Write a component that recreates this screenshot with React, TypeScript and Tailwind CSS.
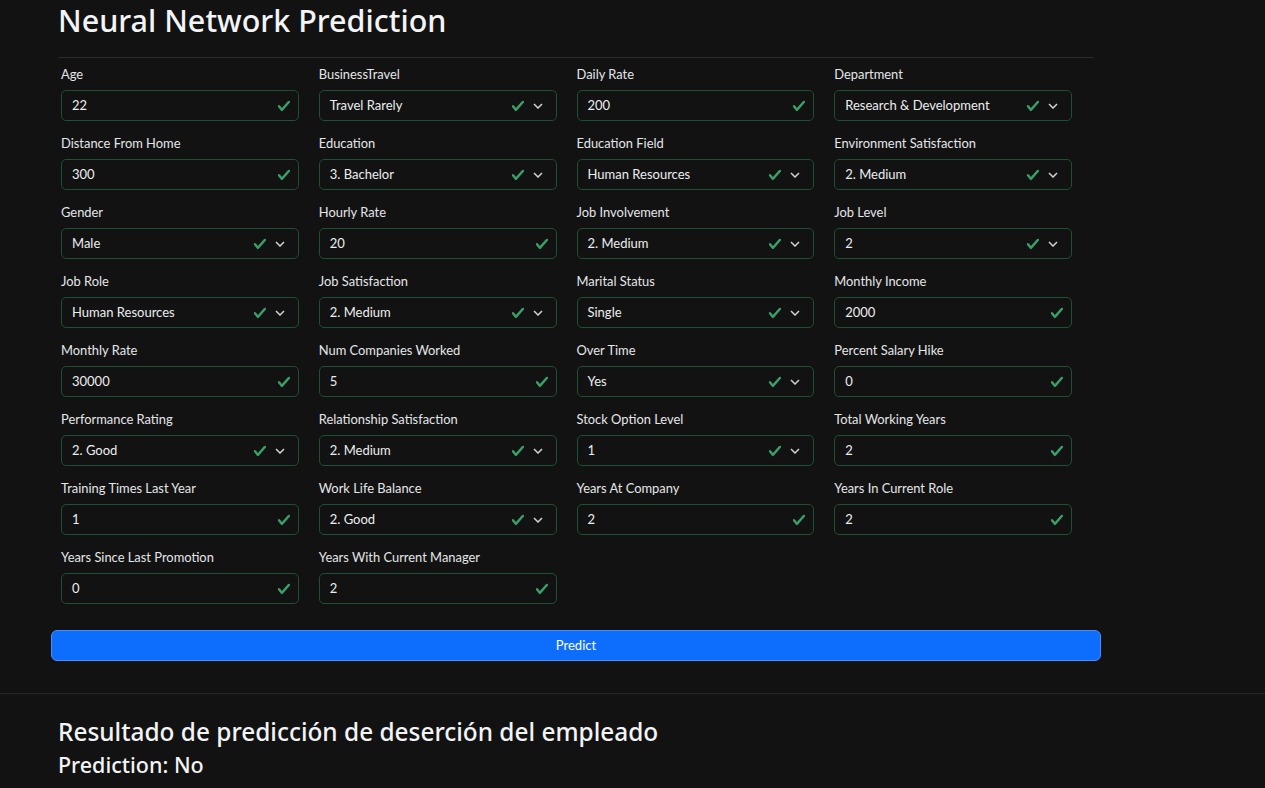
type Field = {
    label: string;
    value: string;
    select?: boolean;
};

const fields: Field[] = [
    { label: 'Age', value: '22' },
    { label: 'BusinessTravel', value: 'Travel Rarely', select: true },
    { label: 'Daily Rate', value: '200' },
    { label: 'Department', value: 'Research & Development', select: true },
    { label: 'Distance From Home', value: '300' },
    { label: 'Education', value: '3. Bachelor', select: true },
    { label: 'Education Field', value: 'Human Resources', select: true },
    { label: 'Environment Satisfaction', value: '2. Medium', select: true },
    { label: 'Gender', value: 'Male', select: true },
    { label: 'Hourly Rate', value: '20' },
    { label: 'Job Involvement', value: '2. Medium', select: true },
    { label: 'Job Level', value: '2', select: true },
    { label: 'Job Role', value: 'Human Resources', select: true },
    { label: 'Job Satisfaction', value: '2. Medium', select: true },
    { label: 'Marital Status', value: 'Single', select: true },
    { label: 'Monthly Income', value: '2000' },
    { label: 'Monthly Rate', value: '30000' },
    { label: 'Num Companies Worked', value: '5' },
    { label: 'Over Time', value: 'Yes', select: true },
    { label: 'Percent Salary Hike', value: '0' },
    { label: 'Performance Rating', value: '2. Good', select: true },
    { label: 'Relationship Satisfaction', value: '2. Medium', select: true },
    { label: 'Stock Option Level', value: '1', select: true },
    { label: 'Total Working Years', value: '2' },
    { label: 'Training Times Last Year', value: '1' },
    { label: 'Work Life Balance', value: '2. Good', select: true },
    { label: 'Years At Company', value: '2' },
    { label: 'Years In Current Role', value: '2' },
    { label: 'Years Since Last Promotion', value: '0' },
    { label: 'Years With Current Manager', value: '2' },
];

function Check() {
    return (
        <svg width="14" height="14" viewBox="0 0 8 8" className="shrink-0">
            <path
                fill="#3a9f68"
                d="M2.3 6.73.6 4.53c-.4-1.04.46-1.4 1.1-.8l1.1 1.4 3.4-3.8c.6-.63 1.6-.27 1.2.7l-4 4.6c-.43.5-.8.4-1.1.1z"
            />
        </svg>
    );
}

function Chevron() {
    return (
        <svg width="10" height="6" viewBox="0 0 10 6" className="shrink-0">
            <path d="M1 1l4 4 4-4" fill="none" stroke="#cfd3d6" strokeWidth="1.5" />
        </svg>
    );
}

function FormField({ field }: { field: Field }) {
    return (
        <div className="flex flex-col" style={{ fontFamily: 'Lato, "Noto Sans", sans-serif' }}>
            <label className="h-[21px] text-[12.9px] leading-[21px] text-[#e4e6e8] mb-[5px] whitespace-nowrap">
                {field.label}
            </label>
            <div
                className={`h-[31px] flex items-center rounded-[5px] border border-[#1e5033] bg-[#121212] pl-[10px] ${
                    field.select ? 'pr-[13px]' : 'pr-[7px]'
                }`}
            >
                <span className="flex-1 text-[13px] text-[#eceef0] whitespace-nowrap">{field.value}</span>
                <Check />
                {field.select && (
                    <span className="ml-[8px] flex items-center">
                        <Chevron />
                    </span>
                )}
            </div>
        </div>
    );
}

export default function App() {
    return (
        <div
            className="min-h-screen bg-[#121212] text-[#eceef0]"
            style={{ fontFamily: '"Noto Sans", "Open Sans", sans-serif' }}
        >
            <div className="pl-[51px] w-[1101px]">
                <div className="px-[7px]">
                    <h1 className="text-[30.5px] leading-[40px] font-medium text-[#f2f4f6] h-[40px]">
                        Neural Network Prediction
                    </h1>
                    <hr className="mt-[17px] border-0 border-t border-[#2b2b2b]" />
                </div>

                <div className="ml-[10px] w-[1011px] mt-[6px] grid grid-cols-4 gap-x-[20px] gap-y-[12px]">
                    {fields.map((f) => (
                        <FormField key={f.label} field={f} />
                    ))}
                </div>

                <button
                    className="mt-[26px] w-[1050px] h-[31px] rounded-[6px] bg-[#0d6efd] border border-[#4a8dfa] text-white text-[13px]"
                    style={{ fontFamily: 'Lato, "Noto Sans", sans-serif' }}
                >
                    Predict
                </button>
            </div>

            <hr className="mt-[32px] border-0 border-t border-[#262626]" />

            <div className="pl-[58px] pt-[22px] pb-[14px]">
                <h3 className="text-[24.4px] leading-[32px] font-medium text-[#f2f4f6]">
                    Resultado de predicción de deserción del empleado
                </h3>
                <h4 className="text-[21.5px] leading-[28px] font-medium text-[#f2f4f6] mt-[3px]">
                    Prediction: No
                </h4>
            </div>
        </div>
    );
}
